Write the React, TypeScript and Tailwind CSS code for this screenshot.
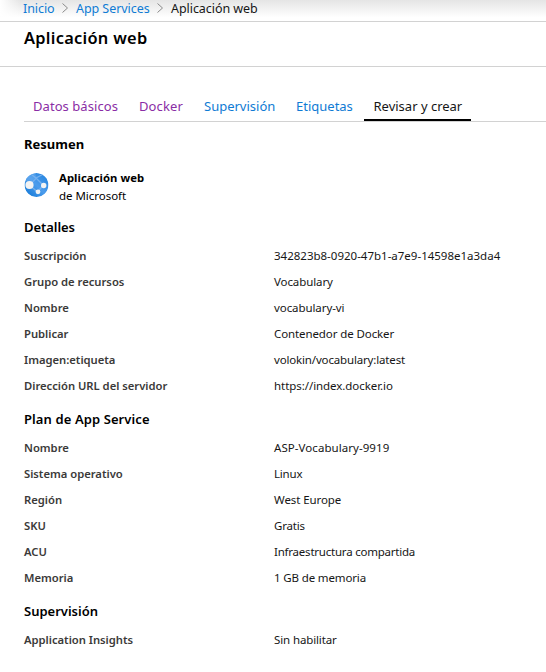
type Row = [label: string, value: string, spacing: string];

const details: Row[] = [
  ['Suscripción', '342823b8-0920-47b1-a7e9-14598e1a3da4', ''],
  ['Grupo de recursos', 'Vocabulary', 'tracking-[-0.1px]'],
  ['Nombre', 'vocabulary-vi', 'tracking-[-0.08px]'],
  ['Publicar', 'Contenedor de Docker', 'tracking-[-0.1px]'],
  ['Imagen:etiqueta', 'volokin/vocabulary:latest', 'tracking-[-0.16px]'],
  ['Dirección URL del servidor', 'https://index.docker.io', 'tracking-[-0.06px]'],
];

const plan: Row[] = [
  ['Nombre', 'ASP-Vocabulary-9919', 'tracking-[0.06px]'],
  ['Sistema operativo', 'Linux', 'tracking-[-0.2px]'],
  ['Región', 'West Europe', 'tracking-[-0.08px]'],
  ['SKU', 'Gratis', 'tracking-[-0.2px]'],
  ['ACU', 'Infraestructura compartida', 'tracking-[-0.22px]'],
  ['Memoria', '1 GB de memoria', 'tracking-[-0.14px]'],
];

const monitoring: Row[] = [['Application Insights', 'Sin habilitar', 'tracking-[-0.12px]']];

function Chevron() {
  return (
    <svg className="mx-[7px] mt-[3px] h-[10px] w-[8px] shrink-0" viewBox="0 0 8 10" fill="none" stroke="#8a8a8a">
      <path d="M1.5 .5 6.5 5l-5 4.5" />
    </svg>
  );
}

function WebAppIcon() {
  return (
    <svg className="h-6 w-[25px] shrink-0" viewBox="0 0 24 24">
      <defs>
        <linearGradient id="globe" x1="0" y1="1" x2="1" y2="0">
          <stop offset="0" stopColor="#0a74d4" />
          <stop offset=".5" stopColor="#4c9cec" />
          <stop offset="1" stopColor="#1f80dc" />
        </linearGradient>
        <clipPath id="disc">
          <circle cx="12" cy="12" r="12" />
        </clipPath>
      </defs>
      <g clipPath="url(#disc)">
        <circle cx="12" cy="12" r="12" fill="url(#globe)" />
        <path d="M5 12 12.5 4.5 19 1M7.5 2l4 3 7.5 7.5M5 12l8 7 6-7" fill="none" stroke="#74b0ef" strokeWidth="1.4" />
        <path d="M2 3 10 0 12.5 4.5 6 9 1 8Z" fill="#79b4f0" opacity=".35" />
      </g>
      <circle cx="5" cy="12" r="4.1" fill="#f3f3f3" />
      <circle cx="19.2" cy="12.5" r="2.7" fill="#f3f3f3" />
      <circle cx="13.5" cy="18.8" r="2.4" fill="#f3f3f3" />
    </svg>
  );
}

function Section({ title, rows, spacing }: { title: string; rows: Row[]; spacing: string }) {
  return (
    <section className="mb-[5px]">
      <h3 className={`h-[31px] text-[13px] leading-5 font-semibold text-black ${spacing}`}>{title}</h3>
      <dl>
        {rows.map(([label, value, valueSpacing]) => (
          <div key={label} className="flex h-[26px] text-[11.5px] leading-4">
            <dt className="w-[250px] shrink-0 text-[11.25px] font-semibold tracking-[-0.02px] text-[#3b3a39]">{label}</dt>
            <dd className={`text-[#161616] ${valueSpacing}`}>{value}</dd>
          </div>
        ))}
      </dl>
    </section>
  );
}

export default function App() {
  return (
    <div className="h-[672px] w-[546px] overflow-hidden bg-white font-['Noto_Sans',sans-serif] whitespace-nowrap text-black">
      <div className="bg-linear-to-b from-[#e5e5e5] to-white to-80%">
        <nav className="flex h-[22px] items-start border-b border-[#d2d2d2] bg-linear-to-r from-white to-transparent to-[20px] pl-[23px] text-[12.5px] leading-[17px] tracking-[-0.06px] text-[#0f7bd4]">
          <a className="w-[31px]">Inicio</a>
          <Chevron />
          <a className="w-[73px]">App Services</a>
          <Chevron />
          <span className="text-[#161616]">Aplicación web</span>
        </nav>
      </div>
      <header className="h-[45px] border-b border-[#d2d2d2] pt-[3px] pl-6">
        <h1 className="text-[16.4px] leading-[25px] font-semibold tracking-[0.28px]">Aplicación web</h1>
      </header>
      <main className="pl-6">
        <div className="mt-[25px] flex h-[30px] border-b border-[#d2d2d2] pl-[9px] text-[13px] leading-[29px] text-[#8a2da5]">
          <a className="w-[106px] tracking-[0.06px]">Datos básicos</a>
          <a className="w-[65px] tracking-[0.12px]">Docker</a>
          <a className="w-[92px] text-[#0f7bd4]">Supervisión</a>
          <a className="w-[68px] text-[#0f7bd4]">Etiquetas</a>
          <a className="h-[29px] w-[107px] border-b-2 border-black pl-[9.5px] text-[#161616]">Revisar y crear</a>
        </div>
        <h2 className="mt-3 h-[35px] text-[13px] leading-5 font-bold">Resumen</h2>
        <div className="flex h-[48px]">
          <div className="mr-[10px] pt-[4px]">
            <WebAppIcon />
          </div>
          <div className="text-[11.5px] leading-[18px]">
            <div className="text-[11.3px] font-bold tracking-[0.06px]">Aplicación web</div>
            <div className="tracking-[-0.03px]">de Microsoft</div>
          </div>
        </div>
        <Section title="Detalles" rows={details} spacing="tracking-[-0.06px]" />
        <Section title="Plan de App Service" rows={plan} spacing="tracking-[0.1px]" />
        <Section title="Supervisión" rows={monitoring} spacing="tracking-normal" />
      </main>
    </div>
  );
}
